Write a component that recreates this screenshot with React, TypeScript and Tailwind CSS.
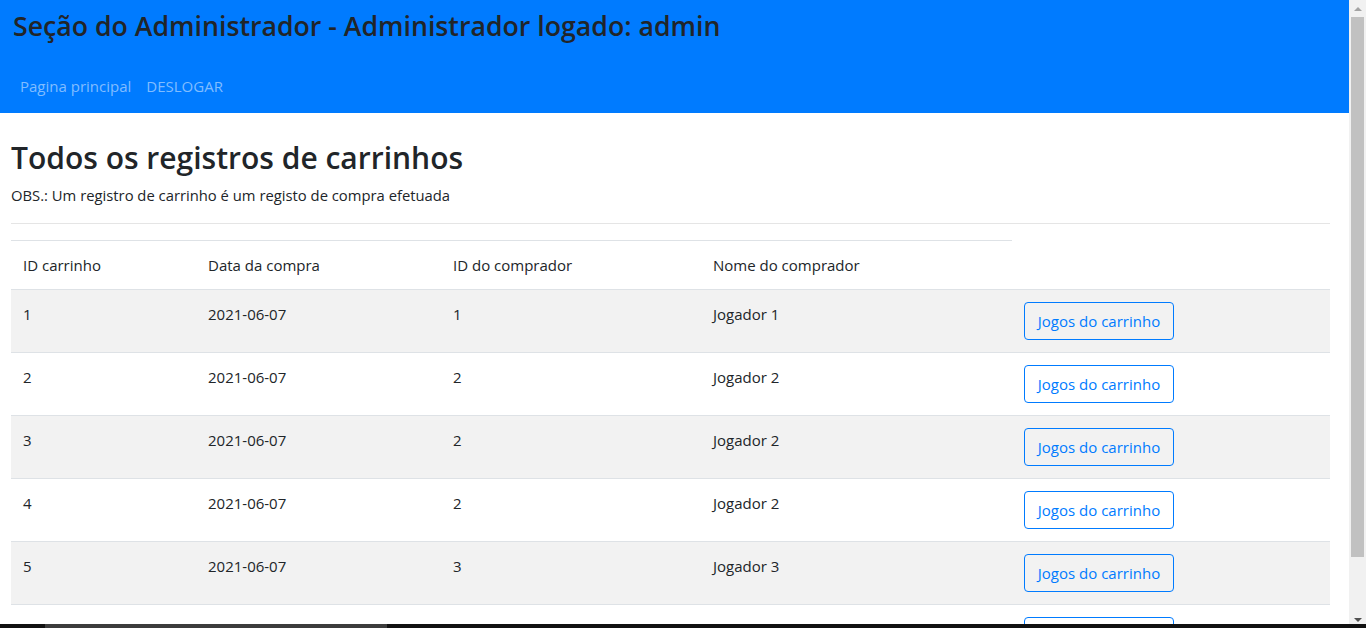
const rows = [
  { id: 1, data: "2021-06-07", comprador: 1, nome: "Jogador 1" },
  { id: 2, data: "2021-06-07", comprador: 2, nome: "Jogador 2" },
  { id: 3, data: "2021-06-07", comprador: 2, nome: "Jogador 2" },
  { id: 4, data: "2021-06-07", comprador: 2, nome: "Jogador 2" },
  { id: 5, data: "2021-06-07", comprador: 3, nome: "Jogador 3" },
  { id: 6, data: "2021-06-10", comprador: 4, nome: "Jogador 4" },
];

const font = { fontFamily: '"Open Sans", "Noto Sans", sans-serif' };

function Scrollbar() {
  return (
    <div className="flex h-full w-[17px] shrink-0 flex-col bg-[#f1f1f1]">
      <div className="flex h-[17px] items-center justify-center">
        <div className="h-0 w-0 border-x-[4px] border-b-[4px] border-x-transparent border-b-[#a3a3a3]" />
      </div>
      <div className="mx-[2px] h-[540px] bg-[#c1c1c1]" />
      <div className="flex-1" />
      <div className="flex h-[17px] items-center justify-center">
        <div className="h-0 w-0 border-x-[4px] border-t-[4px] border-x-transparent border-t-[#505050]" />
      </div>
    </div>
  );
}

export default function App() {
  return (
    <div className="relative flex h-[628px] w-[1366px] overflow-hidden bg-white text-[#212529]" style={font}>
      <div className="flex h-full w-[1349px] shrink-0 flex-col overflow-hidden">
        <header className="flex h-[113px] shrink-0 flex-col bg-[#007bff] px-[13px] pt-[9px]">
          <h3 className="text-[26.7px] font-semibold leading-[34px] text-[#212529]">
            Seção do Administrador - Administrador logado: admin
          </h3>
          <nav className="mt-[31px] flex gap-[15px] pl-[7px] text-[15px] leading-[24px] text-[#80bdff]">
            <a>Pagina principal</a>
            <a>DESLOGAR</a>
          </nav>
        </header>

        <main className="pl-[11px] pr-[19px] pt-[26px]">
          <h2 className="text-[30px] font-semibold leading-[38px]">Todos os registros de carrinhos</h2>
          <p className="mt-[6px] text-[14.8px] leading-[24px]">
            OBS.: Um registro de carrinho é um registo de compra efetuada
          </p>
          <hr className="mt-[16px] border-t border-[#e5e5e5]" />

          <table className="mt-[16px] w-full border-collapse text-left text-[15px] leading-[24px]">
            <thead>
              <tr>
                <th className="w-[185px] border-t border-[#dee2e6] p-[12px] font-normal">ID carrinho</th>
                <th className="w-[245px] border-t border-[#dee2e6] p-[12px] font-normal">Data da compra</th>
                <th className="w-[260px] border-t border-[#dee2e6] p-[12px] font-normal">ID do comprador</th>
                <th className="w-[311px] border-t border-[#dee2e6] p-[12px] font-normal">Nome do comprador</th>
              </tr>
            </thead>
            <tbody>
              {rows.map((r, i) => (
                <tr key={r.id} className={i % 2 === 0 ? "bg-[#f2f2f2]" : "bg-white"}>
                  <td className="border-t border-[#dee2e6] p-[12px] align-top">{r.id}</td>
                  <td className="border-t border-[#dee2e6] p-[12px] align-top">{r.data}</td>
                  <td className="border-t border-[#dee2e6] p-[12px] align-top">{r.comprador}</td>
                  <td className="border-t border-[#dee2e6] p-[12px] align-top">{r.nome}</td>
                  <td className="border-t border-[#dee2e6] p-[12px] align-top">
                    <button className="h-[38px] w-[150px] rounded-[4px] border border-[#007bff] text-[15px] text-[#007bff]">
                      Jogos do carrinho
                    </button>
                  </td>
                </tr>
              ))}
            </tbody>
          </table>
        </main>
      </div>
      <Scrollbar />

      <div className="absolute bottom-0 left-0 flex h-[4px] w-full bg-[#111111]">
        <div className="ml-[45px] w-[342px] bg-[#3c3c3c]" />
      </div>
    </div>
  );
}
